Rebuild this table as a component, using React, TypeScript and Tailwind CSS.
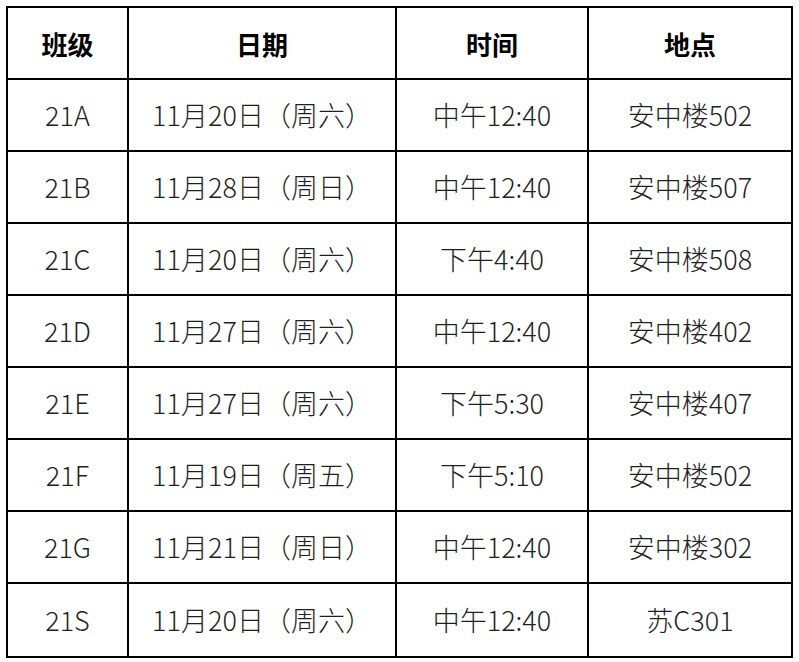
const ROWS = [
  ["21A", "11月20日（周六）", "中午12:40", "安中楼502"],
  ["21B", "11月28日（周日）", "中午12:40", "安中楼507"],
  ["21C", "11月20日（周六）", "下午4:40", "安中楼508"],
  ["21D", "11月27日（周六）", "中午12:40", "安中楼402"],
  ["21E", "11月27日（周六）", "下午5:30", "安中楼407"],
  ["21F", "11月19日（周五）", "下午5:10", "安中楼502"],
  ["21G", "11月21日（周日）", "中午12:40", "安中楼302"],
  ["21S", "11月20日（周六）", "中午12:40", "苏C301"],
];

const HEADERS = ["班级", "日期", "时间", "地点"];

export default function App() {
  return (
    <div className="min-h-[662px] w-[799px] bg-white pl-[6px] pt-[6px] font-['Noto_Sans_CJK_SC','Noto_Sans',sans-serif]">
      <div className="grid w-[787px] grid-cols-[121px_268px_192px_202px] border-2 border-black">
        {HEADERS.map((h, i) => (
          <div
            key={h}
            className={`flex h-[72px] items-center justify-center border-b-2 border-black text-[26px] font-bold text-black ${
              i < 3 ? "border-r-2" : ""
            }`}
          >
            {h}
          </div>
        ))}
        {ROWS.map((row, r) =>
          row.map((cell, i) => (
            <div
              key={`${r}-${i}`}
              className={`flex h-[72px] items-center justify-center border-black text-[27px] font-light text-[#1f1f1f] ${
                i < 3 ? "border-r-2" : ""
              } ${r < ROWS.length - 1 ? "border-b-2" : ""}`}
            >
              {cell}
            </div>
          ))
        )}
      </div>
    </div>
  );
}
